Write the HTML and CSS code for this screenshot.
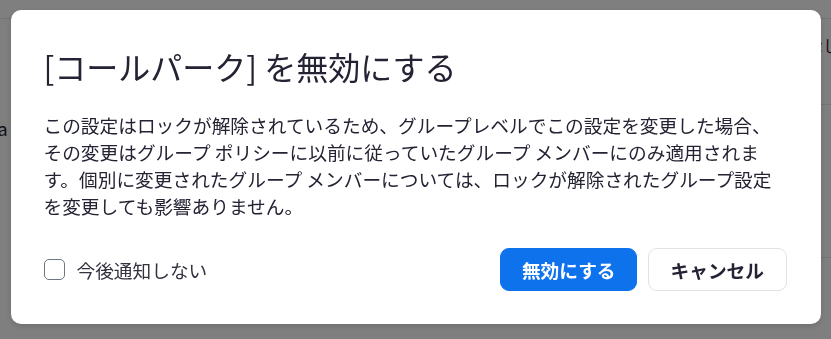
FILE: index.html
```html
<!DOCTYPE html>
<html lang="ja">
<head>
    <meta charset="UTF-8">
    <meta name="viewport" content="width=device-width, initial-scale=1.0">
    <title>コールパーク</title>
    <link rel="stylesheet" href="styles.css">
</head>
<body>
<div class="page">
    <div class="page-header"></div>
    <div class="page-body">
        <div class="side">
            <div class="side-item">Ca</div>
        </div>
        <div class="settings">
            <div class="setting-row">
                <span class="setting-name">コールパーク</span>
                <span class="setting-value">なし</span>
            </div>
            <div class="setting-row tall"></div>
            <div class="setting-row">
                <span class="setting-name">コールパークの有効期限</span>
            </div>
        </div>
    </div>
</div>

<div class="overlay">
    <div class="dialog" role="dialog">
        <h1 class="dialog-title">[コールパーク] を無効にする</h1>
        <p class="dialog-text">この設定はロックが解除されているため、グループレベルでこの設定を変更した場合、その変更はグループ ポリシーに以前に従っていたグループ メンバーにのみ適用されます。個別に変更されたグループ メンバーについては、ロックが解除されたグループ設定を変更しても影響ありません。</p>
        <div class="dialog-footer">
            <label class="dont-show">
                <input type="checkbox" class="checkbox">
                <span>今後通知しない</span>
            </label>
            <div class="button-group">
                <button class="btn btn-primary">無効にする</button>
                <button class="btn btn-default">キャンセル</button>
            </div>
        </div>
    </div>
</div>
</body>
</html>
```

FILE: styles.css
```css
body {
    margin: 0;
    font-family: "Noto Sans CJK JP", "Noto Sans", sans-serif;
    background: #ffffff;
    color: #232333;
    overflow: hidden;
}
.page {
    height: 100vh;
    background: #ffffff;
}
.page-header {
    height: 18px;
    border-bottom: 1px solid #e6e6e6;
}
.page-body {
    display: flex;
}
.side {
    width: 200px;
    padding-top: 96px;
}
.side-item {
    font-size: 18px;
    color: #232333;
    margin-left: -14px;
}
.settings {
    flex: 1;
}
.setting-row {
    display: flex;
    justify-content: space-between;
    align-items: flex-start;
    height: 86px;
    border-bottom: 1px solid #e6e6e6;
    padding-top: 14px;
    box-sizing: border-box;
}
.setting-row.tall {
    height: 153px;
}
.setting-name {
    font-size: 16px;
}
.setting-value {
    font-size: 16px;
    margin-right: -8px;
}
.overlay {
    position: fixed;
    inset: 0;
    background: rgba(0, 0, 0, 0.5);
    display: flex;
    justify-content: center;
    align-items: flex-start;
    padding-top: 10px;
}
.dialog {
    width: 810px;
    box-sizing: border-box;
    background: #ffffff;
    border-radius: 10px;
    padding: 36px 34px 33px 33px;
    box-shadow: 0 2px 6px rgba(0, 0, 0, 0.15);
}
.dialog-title {
    margin: 0;
    font-size: 32px;
    line-height: 40px;
    font-weight: 400;
    color: #232333;
}
.dialog-text {
    margin: 25px 0 0 0;
    font-size: 18.7px;
    line-height: 27px;
    color: #232333;
}
.dialog-footer {
    display: flex;
    justify-content: space-between;
    align-items: center;
    margin-top: 29px;
}
.dont-show {
    display: flex;
    align-items: center;
    gap: 12px;
    font-size: 18.7px;
    color: #333340;
}
.checkbox {
    appearance: none;
    margin: 0;
    width: 21px;
    height: 21px;
    border: 1.5px solid #6e7680;
    border-radius: 5px;
    background: #ffffff;
}
.button-group {
    display: flex;
    gap: 11px;
}
.btn {
    height: 43px;
    padding: 0 20.5px;
    border-radius: 9px;
    font-family: inherit;
    font-size: 18.7px;
    font-weight: 700;
    cursor: pointer;
}
.btn-primary {
    background: #0e72ed;
    border: 1px solid #0e72ed;
    color: #ffffff;
}
.btn-default {
    background: #ffffff;
    border: 1px solid #dfe3e8;
    color: #232333;
    padding: 0 21.5px;
}
```
